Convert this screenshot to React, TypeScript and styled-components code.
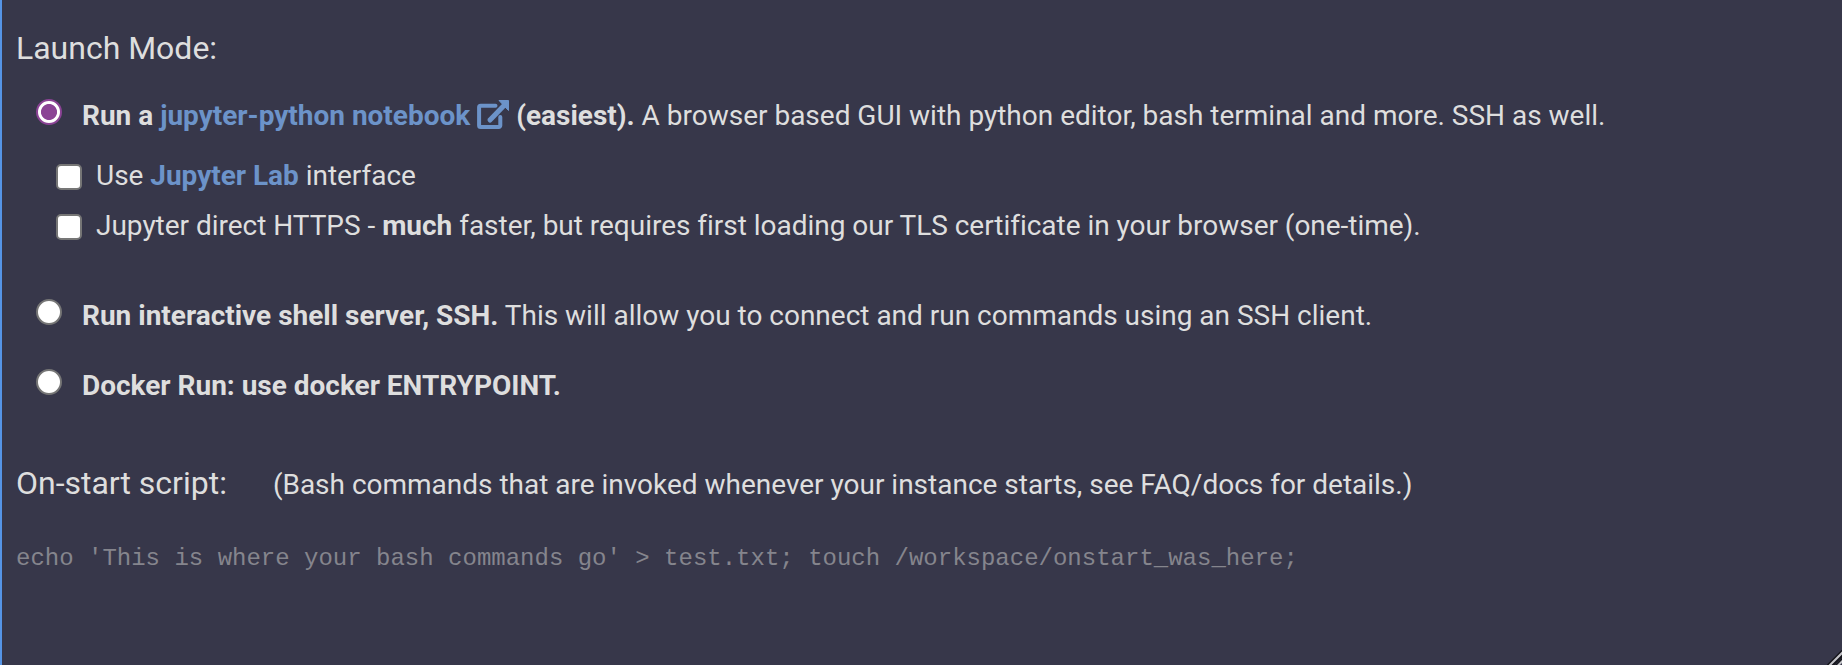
import React from 'react';
import styled, { createGlobalStyle } from 'styled-components';

const GlobalStyle = createGlobalStyle`
  * { box-sizing: border-box; }
  body { margin: 0; background: #37374a; }
`;

const Panel = styled.main`
  position: relative;
  display: flex;
  flex-direction: column;
  height: 665px;
  overflow: hidden;
  padding: 28px 0 0 14px;
  border-left: 2px solid #5594e6;
  background: #37374a;
  color: #dedede;
  font: 28px/32px Roboto, sans-serif;
  letter-spacing: -0.01px;
  white-space: nowrap;
`;

const Heading = styled.h2`
  margin: 0;
  font-size: 32px;
  line-height: 40px;
  font-weight: 400;
`;

const Options = styled.div`
  display: flex;
  flex-direction: column;
  padding: 32px 0 0 20px;
`;

const Option = styled.label<{ $gap?: number }>`
  display: flex;
  gap: 20px;
  margin-top: ${(p) => p.$gap ?? 0}px;
`;

const Checks = styled.div`
  display: flex;
  flex-direction: column;
  gap: 18px;
  padding: 28px 0 0 20px;
  letter-spacing: -0.025px;
`;

const CheckRow = styled.label`
  display: flex;
  gap: 14px;
`;

const Radio = styled.input.attrs({ type: 'radio', name: 'mode' })`
  appearance: none;
  flex: none;
  width: 26px;
  height: 26px;
  margin: -1px 0 0;
  border: 2px solid #767676;
  border-radius: 50%;
  background: #fff;
  &:checked {
    border-color: #8b4395;
    background: radial-gradient(circle, #8b4395 7.6px, #fff 8.4px);
  }
`;

const Checkbox = styled.input.attrs({ type: 'checkbox' })`
  appearance: none;
  flex: none;
  width: 26px;
  height: 26px;
  margin: 4px 0 0;
  border: 2px solid #767676;
  border-radius: 5px;
  background: #fff;
`;

const Link = styled.a`
  color: #6c93c9;
  font-weight: 700;
`;

const LinkIcon = styled.svg`
  width: 32px;
  height: 29px;
  margin-left: 7px;
  vertical-align: -4px;
`;

const ScriptHeader = styled.div`
  display: flex;
  align-items: baseline;
  gap: 46px;
  margin-top: 61px;
`;

const Script = styled.div`
  margin-top: 40px;
  color: #85858d;
  font: 24px/32px "Liberation Mono", monospace;
  letter-spacing: 0;
  white-space: pre;
`;

const Grip = styled.svg`
  position: absolute;
  right: 0;
  bottom: 0;
  width: 15px;
  height: 15px;
`;

export default function App() {
  return (
    <Panel>
      <GlobalStyle />
      <Heading>Launch Mode:</Heading>
      <Options>
        <Option>
          <Radio defaultChecked />
          <span>
            <b>Run a <Link>jupyter-python notebook
              <LinkIcon viewBox="0 0 32 29" fill="none" stroke="currentColor">
                <path d="M18.5 5.8H3.6a1.5 1.5 0 0 0-1.5 1.5v18.2a1.5 1.5 0 0 0 1.5 1.5h18.2a1.5 1.5 0 0 0 1.5-1.5V17" strokeWidth="4" strokeLinecap="round" />
                <path d="M13 20 28 4.5" strokeWidth="5" strokeLinecap="round" />
                <path d="M22 0.5h9.5v10Z" fill="currentColor" strokeWidth="1" strokeLinejoin="round" />
              </LinkIcon></Link> (easiest).</b> A browser based GUI with python editor, bash terminal and more. SSH as well.
          </span>
        </Option>
        <Checks>
          <CheckRow>
            <Checkbox />
            <span>Use <Link>Jupyter Lab</Link> interface</span>
          </CheckRow>
          <CheckRow>
            <Checkbox />
            <span>Jupyter direct HTTPS - <b>much</b> faster, but requires first loading our TLS certificate in your browser (one-time).</span>
          </CheckRow>
        </Checks>
        <Option $gap={58}>
          <Radio />
          <span><b>Run interactive shell server, SSH.</b> This will allow you to connect and run commands using an SSH client.</span>
        </Option>
        <Option $gap={38}>
          <Radio />
          <b>Docker Run: use docker ENTRYPOINT.</b>
        </Option>
      </Options>
      <ScriptHeader>
        <Heading>On-start script:</Heading>
        <span>(Bash commands that are invoked whenever your instance starts, see FAQ/docs for details.)</span>
      </ScriptHeader>
      <Script>{"echo 'This is where your bash commands go' > test.txt; touch /workspace/onstart_was_here;"}</Script>
      <Grip viewBox="0 0 15 15" fill="none">
        <path d="M0 16 16 0M4 17 17 4M8.5 16l8-8" stroke="#15151b" strokeWidth="2" />
        <path d="M2 16 16 2M10.5 16l6-6" stroke="#c4c4c8" strokeWidth="2" />
      </Grip>
    </Panel>
  );
}
